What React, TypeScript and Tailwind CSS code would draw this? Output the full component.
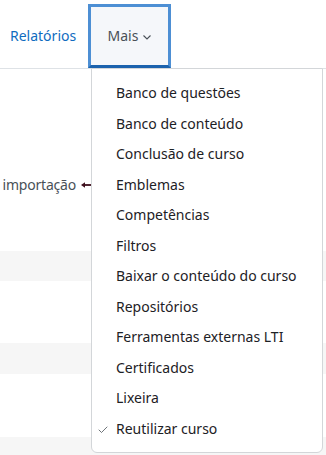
import { Check } from "lucide-react"

const items = [
  "Banco de questões",
  "Banco de conteúdo",
  "Conclusão de curso",
  "Emblemas",
  "Competências",
  "Filtros",
  "Baixar o conteúdo do curso",
  "Repositórios",
  "Ferramentas externas LTI",
  "Certificados",
  "Lixeira",
  "Reutilizar curso",
]

export default function App() {
  return (
    <div className="relative w-[326px] h-[455px] overflow-hidden bg-white font-['Noto_Sans',sans-serif] text-[14px] leading-[22.5px]">
      {/* secondary navigation */}
      <nav className="flex items-end h-[69px] border-b border-[#dee2e6]">
        <a className="flex items-center w-[88px] h-[63px] pl-[10px] text-[#0f6cbf]">Relatórios</a>
        <div className="flex items-center justify-center gap-[5px] w-[83px] h-[64px] border-[3px] border-[#4d8fd4] border-b-[#1b62ad] bg-[#f5f7fa] text-[#495057]">
          <span>Mais</span>
          <svg width="8" height="5" viewBox="0 0 8 5" fill="none" className="mt-[2px]">
            <path d="M0.5 0.5 L4 4 L7.5 0.5" stroke="#495057" strokeWidth="1.1" />
          </svg>
        </div>
      </nav>

      {/* page content behind the menu */}
      <div className="flex flex-col">
        <div className="h-[182px] flex items-start">
          <div className="flex items-center w-[91px] mt-[105px] justify-end whitespace-nowrap text-[#495057]">
            <span className="tracking-[-0.2px]">importação</span>
            <svg width="10" height="6" viewBox="0 0 10 6" className="ml-[5px] shrink-0">
              <path d="M0 3 L4 0.3 L4 5.7 Z" fill="#3d0f1c" />
              <rect x="3" y="2.1" width="7" height="1.8" fill="#3d0f1c" />
            </svg>
          </div>
        </div>
        <div className="h-[30px] bg-[#f6f6f6]" />
        <div className="h-[62px]" />
        <div className="h-[31px] bg-[#f6f6f6]" />
        <div className="h-[63px]" />
        <div className="h-[30px] bg-[#f6f6f6]" />
      </div>

      {/* dropdown menu */}
      <div className="absolute left-[91px] top-[68px] w-[232px] bg-white border border-[#d3d6d9] rounded-b-[6px] pt-[9px] pb-2 text-[#1d2125]">
        {items.map((label, i) => (
          <div key={label} className="relative h-[30.5px] py-1 pl-6 whitespace-nowrap">
            {i === items.length - 1 && (
              <Check size={12} strokeWidth={1.6} className="absolute left-[5px] top-[10px] text-[#495057]" />
            )}
            {label}
          </div>
        ))}
      </div>
    </div>
  )
}
